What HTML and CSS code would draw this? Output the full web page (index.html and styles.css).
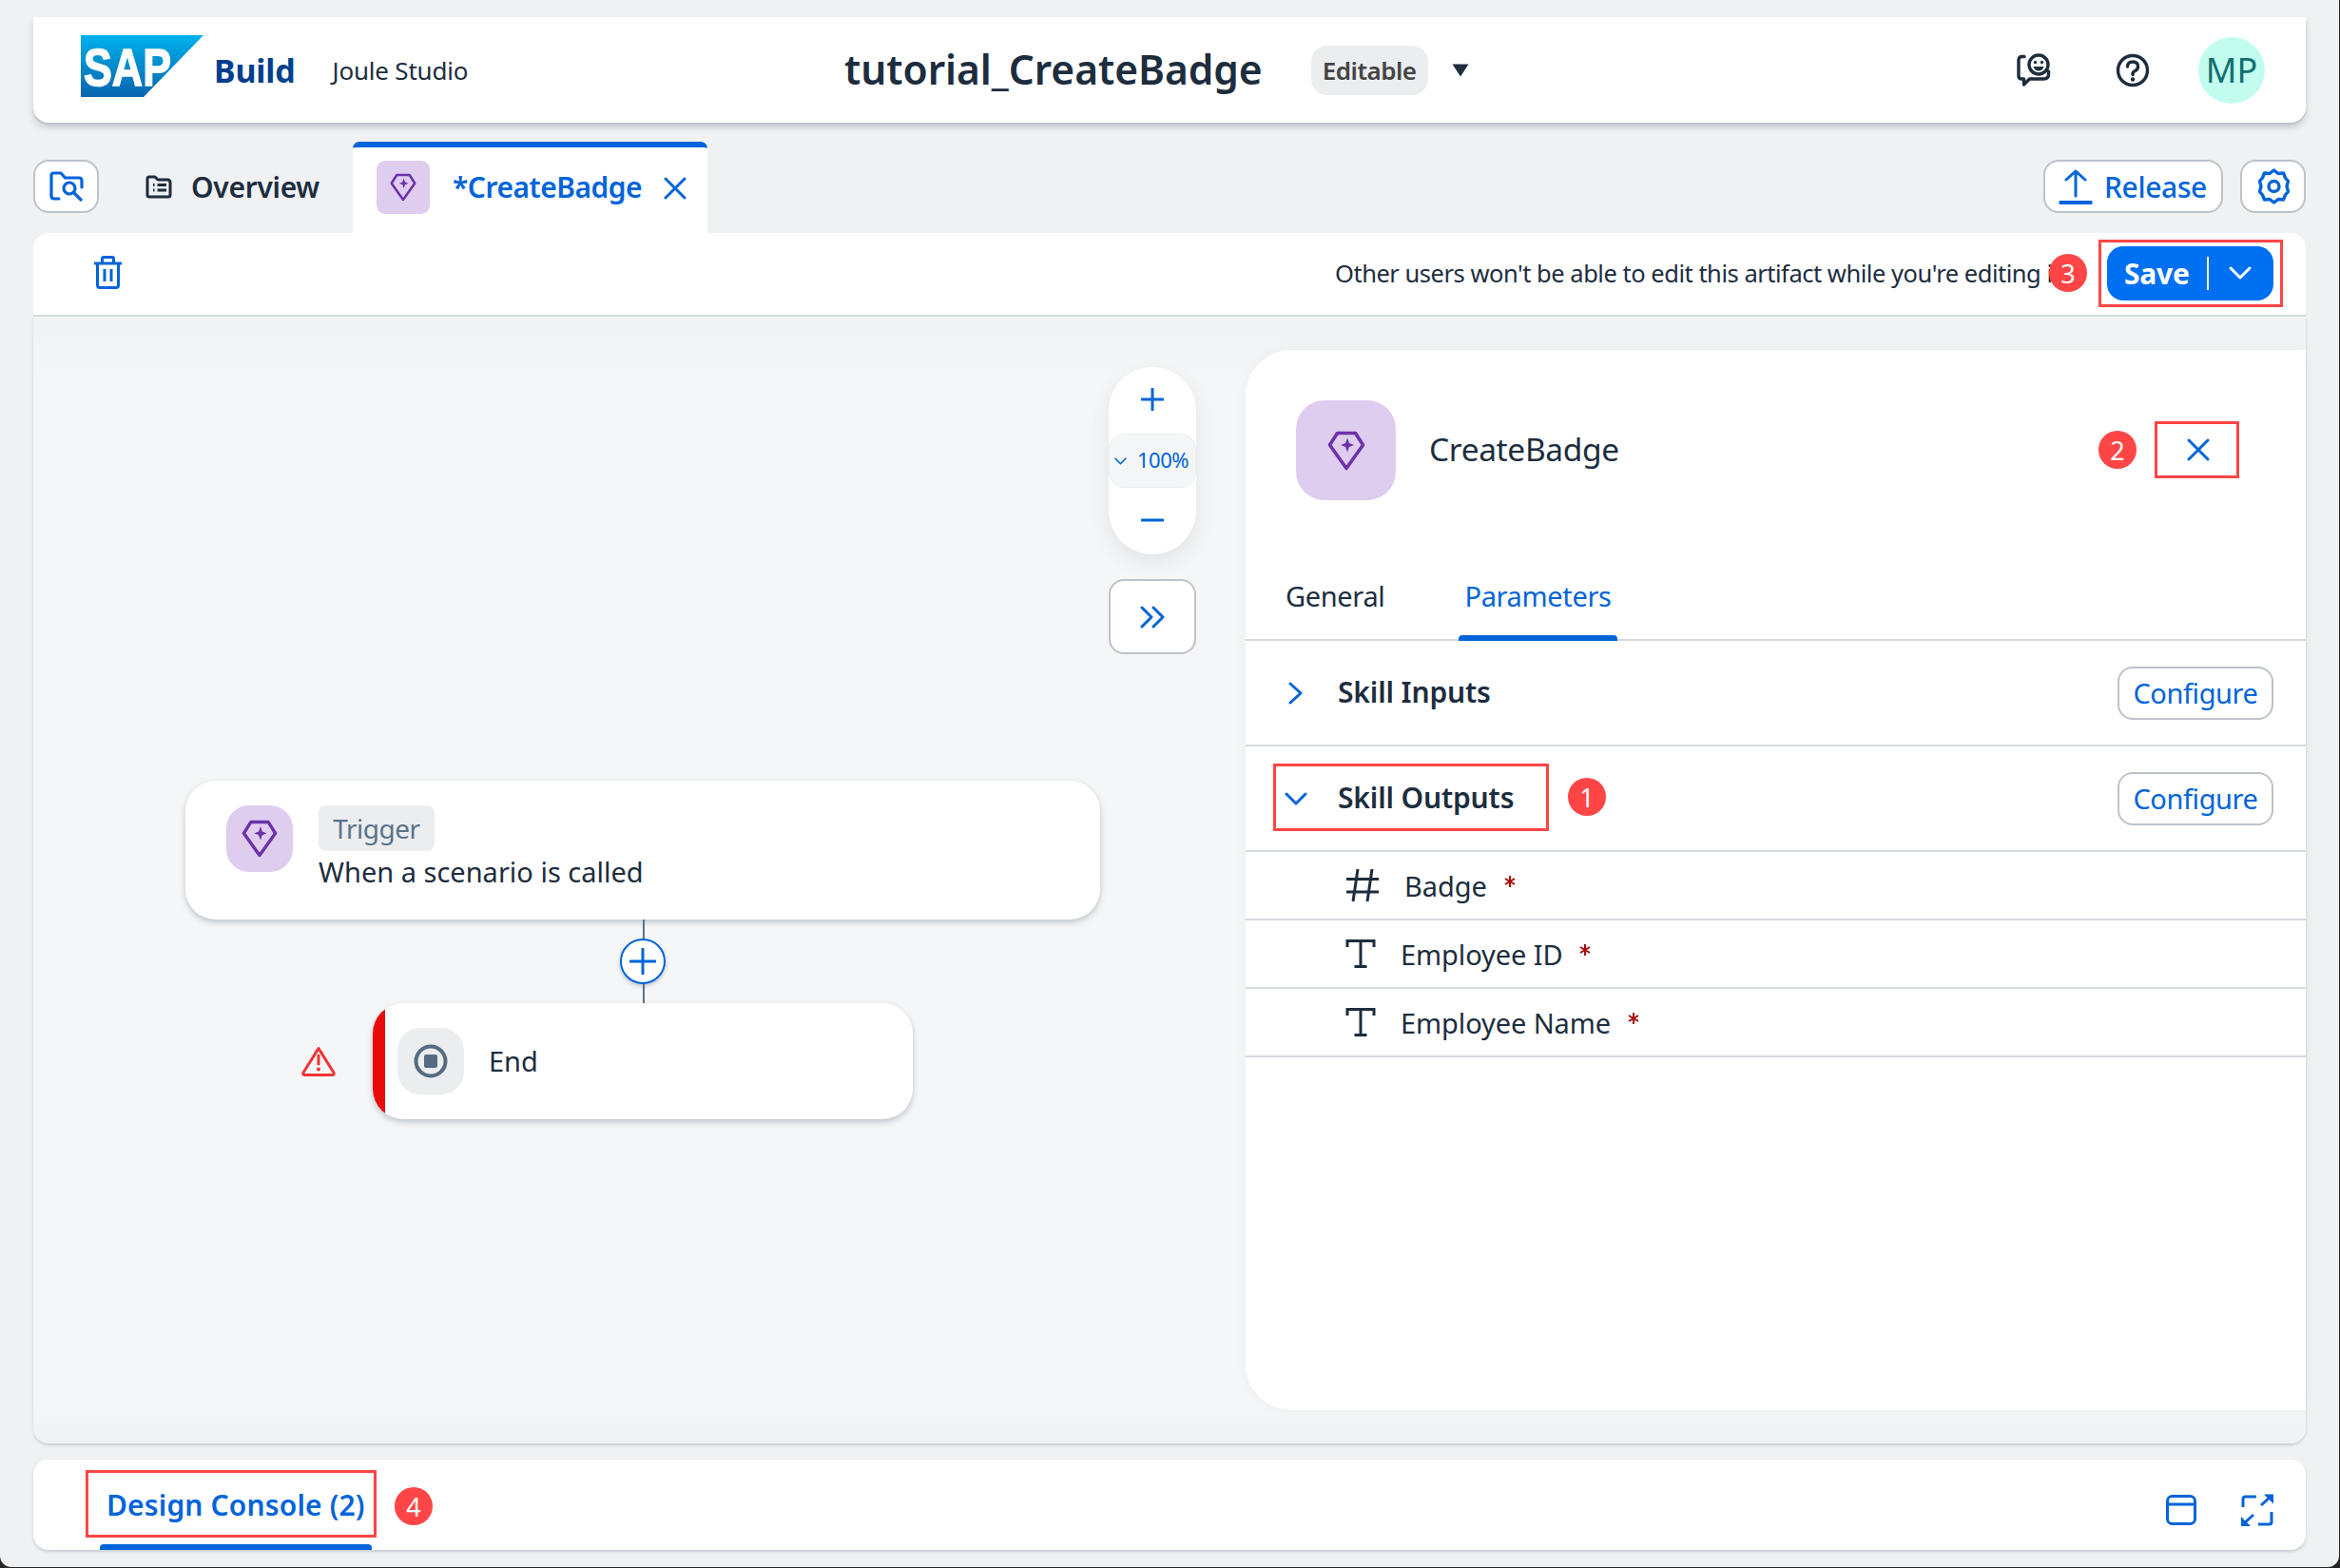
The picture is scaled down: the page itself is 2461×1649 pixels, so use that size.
FILE: index.html
```html
<!DOCTYPE html>
<html lang="en">
<head>
<meta charset="utf-8">
<title>tutorial_CreateBadge</title>
<link rel="stylesheet" href="styles.css">
</head>
<body>
<svg class="defs" width="0" height="0" aria-hidden="true">
  <defs>
    <linearGradient id="sapg" x1="0" y1="0" x2="0" y2="1"><stop offset="0" stop-color="#00b1eb"/><stop offset="1" stop-color="#0764ae"/></linearGradient>
    <symbol id="gem" viewBox="0 0 40 42">
      <path d="M10.5 2.5h19L37.5 15 20 39.5 2.500 15z" fill="none" stroke="#6c32a9" stroke-width="3.600" stroke-linejoin="round"/>
      <path d="M21 7.500l2 5.500 5 2-5 2-2 5.500-2-5.500-5-2 5-2z" fill="#6c32a9"/>
    </symbol>
    <symbol id="x" viewBox="0 0 24 24"><path d="M2 2l20 20M22 2L2 22" fill="none" stroke="#0064d9" stroke-width="3" stroke-linecap="round"/></symbol>
    <symbol id="dn" viewBox="0 0 24 14"><path d="M2 2l10 10L22 2" fill="none" stroke="#0064d9" stroke-width="3" stroke-linecap="round" stroke-linejoin="round"/></symbol>
    <symbol id="star" viewBox="0 0 12 14"><path d="M6 1v12M1 4l10 6M11 4L1 10" fill="none" stroke="#aa0808" stroke-width="2"/></symbol>
    <symbol id="tt" viewBox="0 0 32 32"><path d="M2 9V2.500h28V9M16 2.500V29.500M9.500 29.500h13" fill="none" stroke="#1d2d3e" stroke-width="3"/></symbol>
  </defs>
</svg>
<div class="app">
  <header class="shell">
    <div class="brand">
      <svg class="sap" width="129" height="65" viewBox="0 0 129 65"><path d="M0 0H129L66 65H0z" fill="url(#sapg)"/><text x="3" y="53" class="sap-text" textLength="92" lengthAdjust="spacingAndGlyphs">SAP</text></svg>
      <span class="build">Build</span>
      <span class="studio">Joule Studio</span>
    </div>
    <div class="title-wrap">
      <span class="title">tutorial_CreateBadge</span>
      <span class="pill">Editable</span>
      <svg class="caret" width="18" height="14" viewBox="0 0 18 14"><path d="M0.500 0.500h17L9 13.500z" fill="#1d2d3e"/></svg>
    </div>
    <div class="shell-actions">
      <svg width="37" height="36" viewBox="0 0 37 36"><g fill="none" stroke="#1d2d3e" stroke-width="3.400" stroke-linecap="round" stroke-linejoin="round"><path d="M8 3.500H5.500Q2 3.500 2 7v17q0 3 3.500 3h2v6l6-6h15q5 0 5-5v-3"/><circle cx="23" cy="12" r="10"/></g><circle cx="19.500" cy="9.500" r="1.700" fill="#1d2d3e"/><circle cx="26.500" cy="9.500" r="1.700" fill="#1d2d3e"/><path d="M17.500 14h11q-1.500 4.500-5.500 4.500T17.500 14z" fill="#1d2d3e"/></svg>
      <svg width="36" height="36" viewBox="0 0 36 36"><circle cx="18" cy="18" r="15.500" fill="none" stroke="#1d2d3e" stroke-width="3.400"/><path d="M12.500 14q0-5 5.500-5t5.500 5q0 3-3 4.500T18 22.500" fill="none" stroke="#1d2d3e" stroke-width="3.400" stroke-linecap="round"/><circle cx="18" cy="27.500" r="2.200" fill="#1d2d3e"/></svg>
      <span class="avatar">MP</span>
    </div>
  </header>

  <nav class="tabs">
    <button class="btn btn-icon btn-search">
      <svg width="36" height="32" viewBox="0 0 36 32"><g fill="none" stroke="#0064d9" stroke-width="3.200" stroke-linecap="round" stroke-linejoin="round"><path d="M10 29H5q-3 0-3-3V4.500Q2 2 4.500 2H12l4.500 5H31q3 0 3 3v7"/><circle cx="21" cy="18" r="6"/><path d="M25.500 22.500L33 30"/></g></svg>
    </button>
    <a class="tab-plain">
      <svg width="28" height="25" viewBox="0 0 28 25"><g fill="none" stroke="#1d2d3e" stroke-width="3" stroke-linejoin="round"><path d="M2 21V4q0-2 2-2h6l3 3h10q3 0 3 3v13q0 2-2 2H4q-2 0-2-2z"/></g><path d="M8 10.500h1.500M8 16h1.500M12.500 10.500H22M12.500 16H22" stroke="#1d2d3e" stroke-width="3"/></svg>
      <span>Overview</span>
    </a>
    <a class="tab-active">
      <span class="tab-gem"><svg width="28" height="30"><use href="#gem"/></svg></span>
      <span class="tab-name">*CreateBadge</span>
      <svg width="24" height="24"><use href="#x"/></svg>
    </a>
    <div class="tabs-end">
      <button class="btn btn-release">
        <svg width="36" height="37" viewBox="0 0 36 37"><path d="M18 2v26M8 11l10-9 10 9" fill="none" stroke="#0064d9" stroke-width="3" stroke-linecap="round" stroke-linejoin="round"/><rect x="0.500" y="33" width="35" height="4" rx="1" fill="#0064d9"/></svg>
        <span>Release</span>
      </button>
      <button class="btn btn-icon">
        <svg class="gear" width="33" height="38" viewBox="0 0 33 38"><g fill="none" stroke="#0064d9" stroke-width="3.400" stroke-linejoin="round"><path d="M16.500 2l4.500 3.500 5.500-.5 2 5 3 3.500-1.500 5.500 1.500 5.500-3 3.500-2 5-5.500-.5-4.500 3.500-4.500-3.500-5.500.5-2-5-3-3.500 1.500-5.500-1.500-5.500 3-3.500 2-5 5.500.5z"/><circle cx="16.500" cy="19" r="5.500"/></g></svg>
      </button>
    </div>
  </nav>

  <div class="toolbar">
    <svg class="trash" width="31" height="35" viewBox="0 0 31 35"><g fill="none" stroke="#0064d9" stroke-width="3" stroke-linejoin="round"><path d="M1 8h29M4.500 8v23q0 2.500 2.500 2.500h17q2.500 0 2.500-2.500V8M9.500 8V3q0-1.500 1.500-1.500h9Q21.500 1.500 21.500 3v5M12 14v13M19 14v13"/></g></svg>
    <div class="notice">Other users won't be able to edit this artifact while you're editing it</div>
    <span class="mark mark-3">3</span>
    <div class="save-wrap">
      <div class="save">
        <span class="save-label">Save</span>
        <span class="save-sep"></span>
        <svg width="24" height="14" viewBox="0 0 24 14"><path d="M2 2l10 10L22 2" fill="none" stroke="#fff" stroke-width="3" stroke-linecap="round" stroke-linejoin="round"/></svg>
      </div>
    </div>
  </div>

  <main class="canvas">
    <section class="flow">
      <div class="zoombar">
        <svg width="24" height="24" viewBox="0 0 24 24"><path d="M12 1v22M1 12h22" stroke="#0064d9" stroke-width="3" stroke-linecap="round"/></svg>
        <div class="zoom-val"><svg width="13" height="8"><use href="#dn"/></svg><span>100%</span></div>
        <svg width="24" height="24" viewBox="0 0 24 24"><path d="M1 12h22" stroke="#0064d9" stroke-width="3" stroke-linecap="round"/></svg>
      </div>
      <button class="btn btn-expand">
        <svg width="28" height="24" viewBox="0 0 28 24"><path d="M3 2l10 10L3 22M15 2l10 10-10 10" fill="none" stroke="#0064d9" stroke-width="3" stroke-linecap="round" stroke-linejoin="round"/></svg>
      </button>

      <div class="node node-trigger">
        <span class="node-ico ico-gem"><svg width="38" height="40"><use href="#gem"/></svg></span>
        <div class="node-body">
          <span class="tag">Trigger</span>
          <span class="node-text">When a scenario is called</span>
        </div>
      </div>
      <div class="wire"></div>
      <div class="plus"><svg width="28" height="28" viewBox="0 0 28 28"><path d="M14 1v26M1 14h26" stroke="#0064d9" stroke-width="3" stroke-linecap="round"/></svg></div>
      <div class="node node-end">
        <span class="node-ico ico-end"><svg width="36" height="36" viewBox="0 0 36 36"><circle cx="18" cy="18" r="15.500" fill="none" stroke="#556b82" stroke-width="4"/><rect x="11" y="11" width="14" height="14" rx="2" fill="#556b82"/></svg></span>
        <span class="node-text">End</span>
      </div>
      <svg class="warn" width="36" height="32" viewBox="0 0 36 32"><path d="M18 2.500L34 28q.8 2-1.500 2.500h-29Q1.200 30 2 28z" fill="none" stroke="#f53232" stroke-width="3" stroke-linejoin="round"/><path d="M18 10v9" stroke="#f53232" stroke-width="3" stroke-linecap="round"/><circle cx="18" cy="24.500" r="2" fill="#f53232"/></svg>
    </section>

    <aside class="panel">
      <div class="panel-head">
        <span class="panel-ico"><svg width="40" height="42"><use href="#gem"/></svg></span>
        <span class="panel-name">CreateBadge</span>
        <span class="mark mark-2">2</span>
        <span class="close-box"><svg width="24" height="24"><use href="#x"/></svg></span>
      </div>
      <div class="panel-tabs">
        <span class="ptab ptab-gen">General</span>
        <span class="ptab ptab-on">Parameters</span>
      </div>
      <div class="row-head">
        <svg class="chev-r" width="16" height="24" viewBox="0 0 16 24"><path d="M2 2l11 10L2 22" fill="none" stroke="#0064d9" stroke-width="3" stroke-linecap="round" stroke-linejoin="round"/></svg>
        <span class="row-title">Skill Inputs</span>
        <button class="btn btn-config">Configure</button>
      </div>
      <div class="row-head row-out">
        <svg class="chev-d" width="24" height="14"><use href="#dn"/></svg>
        <span class="row-title">Skill Outputs</span>
        <span class="outbox"></span>
        <span class="mark mark-1">1</span>
        <button class="btn btn-config">Configure</button>
      </div>
      <div class="param">
        <svg class="pi-hash" width="36" height="36" viewBox="0 0 36 36"><path d="M13 1L8 35M28 1L23 35M1 11.500h34M1 25h34" fill="none" stroke="#1d2d3e" stroke-width="3"/></svg>
        <span class="pname">Badge</span>
        <svg class="req" width="12" height="14"><use href="#star"/></svg>
      </div>
      <div class="param">
        <svg class="pi-t" width="32" height="32"><use href="#tt"/></svg>
        <span class="pname">Employee ID</span>
        <svg class="req" width="12" height="14"><use href="#star"/></svg>
      </div>
      <div class="param">
        <svg class="pi-t" width="32" height="32"><use href="#tt"/></svg>
        <span class="pname">Employee Name</span>
        <svg class="req" width="12" height="14"><use href="#star"/></svg>
      </div>
    </aside>
  </main>

  <footer class="console">
    <span class="console-box"></span>
    <span class="console-title">Design Console (2)</span>
    <span class="mark mark-4">4</span>
    <span class="console-line"></span>
    <div class="console-end">
      <svg width="32" height="32" viewBox="0 0 32 32"><g fill="none" stroke="#0064d9" stroke-width="3"><rect x="1.500" y="1.500" width="29" height="29" rx="5"/><path d="M1.500 10h29"/></g></svg>
      <svg width="36" height="36" viewBox="0 0 36 36"><g fill="none" stroke="#0064d9" stroke-width="3"><path d="M17 4H5.500Q3 4 3 6.500V15M33 20v10.500Q33 33 30.500 33H19"/><path d="M22 13L33 3M14 23L3 33"/></g><path d="M25 1.500h10v10zM1 25v10h10z" fill="#0064d9"/></svg>
    </div>
  </footer>
</div>
</body>
</html>
```
FILE: styles.css
```css
* { box-sizing: border-box; }
html, body { margin: 0; padding: 0; background: #262626; }
body { width: 2461px; height: 1649px; overflow: hidden; font-family: "Noto Sans", "Open Sans", sans-serif; color: #1d2d3e; }
.defs { position: absolute; }
.app {
  width: 2460px; height: 1648px; background: #eff1f3;
  border-radius: 0 0 12px 12px; padding: 18px 35px 0;
  display: flex; flex-direction: column; overflow: hidden;
}
svg { display: block; flex: none; }

/* shell */
.shell {
  height: 111px; flex: none; background: #fff; border-radius: 0 0 16px 16px;
  box-shadow: 0 2px 0 #c0c6cb, 0 5px 6px rgba(120,130,140,.35);
  display: flex; align-items: center; position: relative; padding: 0 43px 0 50px;
}
.brand { display: flex; align-items: center; }
.sap { margin-top: -9px; }
.sap-text { font: 700 56px "Liberation Sans", sans-serif; fill: #fff; stroke: #fff; stroke-width: 1.500px; }
.build { font-size: 34px; font-weight: 700; color: #003f8e; margin-left: 11px; letter-spacing: -0.2px; }
.studio { font-size: 26px; margin-left: 39px; letter-spacing: -0.2px; }
.title-wrap { position: absolute; left: 853px; top: 30px; height: 52px; display: flex; align-items: center; }
.title { font-size: 42.500px; font-weight: 600; letter-spacing: -0.05px; margin-top: -3px; }
.pill {
  height: 52px; width: 123px; border-radius: 17px; background: #ebedef; margin-left: 51px;
  display: flex; align-items: center; justify-content: center;
  font-size: 26px; font-weight: 600; color: #444; letter-spacing: -0.5px;
}
.caret { margin-left: 25px; }
.shell-actions { margin-left: auto; display: flex; align-items: center; }
.shell-actions svg:nth-child(1) { margin-right: 67px; }
.shell-actions svg:nth-child(2) { margin-right: 51px; }
.avatar {
  width: 70px; height: 70px; border-radius: 50%; background: #c2fcee; color: #0f6f6f;
  display: flex; align-items: center; justify-content: center; font-size: 36px;
}

/* tabs */
.tabs { height: 96px; flex: none; margin-top: 20px; display: flex; align-items: flex-start; }
.btn { background: #fff; border: 2px solid #bcc3ca; border-radius: 16px; padding: 0; font-family: inherit; color: #0064d9; display: flex; align-items: center; justify-content: center; }
.btn-icon { width: 69px; height: 56px; }
.tabs .btn { margin-top: 19px; }
.tab-plain { display: flex; align-items: center; margin: 35px 0 0 49px; height: 25px; }
.tab-plain span { font-size: 30px; font-weight: 600; margin-left: 20px; letter-spacing: -0.3px; }
.tab-active {
  width: 373px; height: 96px; margin-left: 35px; background: #fff; border-top: 6px solid #0064d9;
  border-radius: 7px 7px 0 0; display: flex; align-items: flex-start; padding: 14px 0 0 25px;
}
.tab-gem { width: 56px; height: 56px; border-radius: 9px; background: #dfcdf0; display: flex; align-items: center; justify-content: center; }
.tab-name { font-size: 30px; font-weight: 600; color: #0064d9; margin: 7px 0 0 24px; width: 222px; letter-spacing: -0.5px; line-height: 42px; }
.tab-active > svg { margin-top: 17px; }
.tabs-end { margin-left: auto; display: flex; }
.btn-release { width: 189px; height: 56px; gap: 12px; padding-right: 1px; }
.btn-release span { font-size: 30px; font-weight: 500; letter-spacing: -0.35px; }
.tabs-end .btn-icon { margin-left: 18px; }
.gear { margin-left: 2px; }

/* toolbar */
.toolbar {
  height: 88px; flex: none; background: #fff; border-radius: 16px 16px 0 0; border-bottom: 2px solid #d5dadd;
  display: flex; align-items: center; padding: 0 34px 0 63px; position: relative;
}
.trash { margin-top: -3px; }
.notice { position: absolute; left: 1369px; top: 20px; font-size: 25.500px; line-height: 44px; white-space: nowrap; letter-spacing: -0.48px; }
.save-wrap { margin-left: auto; border: 3px solid #ff4545; width: 194px; height: 71px; display: flex; align-items: center; justify-content: center; margin-right: -10px; margin-top: -2px; }
.save { width: 175px; height: 57px; margin-left: -1px; background: #0070f2; border-radius: 17px; display: flex; align-items: center; color: #fff; padding-left: 18px; }
.save-label { font-size: 30px; font-weight: 700; letter-spacing: -0.2px; width: 70px; white-space: nowrap; }
.save-sep { width: 2px; height: 35px; background: #fff; margin: 0 21px 0 17px; }

/* marks */
.mark {
  position: absolute; width: 40px; height: 40px; border-radius: 50%; background: #ff4545; color: #fff;
  display: flex; align-items: center; justify-content: center; font-size: 27px; z-index: 3;
}
.mark-3 { left: 2120px; top: 22px; }

/* canvas */
.canvas {
  flex: 1 1 auto; height: 1185px; max-height: 1185px; background: linear-gradient(#f1f2f4 0, #f5f6f7 60px, #f5f6f7 1150px, #f0f1f3 1185px);
  border-radius: 0 0 16px 16px; box-shadow: 0 2px 3px #c8cdd2;
  display: flex; position: relative; align-items: flex-start;
}
.flow { width: 1275px; height: 1150px; flex: none; position: relative; }
.zoombar {
  position: absolute; left: 1131px; top: 53px; width: 92px; height: 197px; border-radius: 46px; background: #fff;
  box-shadow: 0 8px 20px rgba(80,100,120,.12); display: flex; flex-direction: column; align-items: center; padding: 22px 0 24px;
  justify-content: space-between;
}
.zoom-val {
  position: absolute; left: 0; top: 70px; width: 92px; height: 57px; background: #f5f6f7; border-radius: 16px; border: 1px solid #eceef0;
  display: flex; align-items: center; padding-left: 5px; gap: 11px; color: #0064d9; font-size: 22px; letter-spacing: -0.5px;
}
.zoom-val span { margin-top: -3px; }
.btn-expand { position: absolute; left: 1131px; top: 276px; width: 92px; height: 79px; }
.node { position: absolute; background: #fff; border-radius: 32px; box-shadow: 0 3px 6px rgba(90,110,130,.35); display: flex; }
.node-trigger { left: 160px; top: 488px; width: 962px; height: 146px; padding: 26px 0 0 43px; z-index: 2; }
.node-ico { width: 70px; height: 70px; border-radius: 24px; display: flex; align-items: center; justify-content: center; flex: none; }
.ico-gem { background: #dfcdf0; }
.ico-end { background: #ebedef; }
.node-body { margin-left: 27px; display: flex; flex-direction: column; align-items: flex-start; }
.tag { height: 48px; width: 122px; background: #ebedef; border-radius: 8px; display: flex; align-items: center; justify-content: center; font-size: 28px; color: #5b738b; letter-spacing: -0.5px; }
.node-text { font-size: 29px; line-height: 44px; letter-spacing: 0; }
.wire { position: absolute; left: 641px; top: 634px; width: 2px; height: 88px; background: #5b738b; z-index: 1; }
.plus { position: absolute; left: 617px; top: 654px; width: 48px; height: 48px; border-radius: 50%; border: 2px solid #0064d9; background: #fff; box-shadow: 0 2px 4px rgba(90,110,130,.35); display: flex; align-items: center; justify-content: center; z-index: 2; }
.node-end { left: 357px; top: 722px; width: 568px; height: 122px; align-items: center; padding-left: 26px; overflow: hidden; z-index: 2; }
.node-end::before { content: ""; position: absolute; left: 0; top: 0; bottom: 0; width: 13px; background: #e90b0b; }
.node-end .node-text { margin-left: 26px; }
.warn { position: absolute; left: 282px; top: 767px; }

/* panel */
.panel { width: 1115px; height: 1115px; margin-top: 35px; flex: none; background: #fff; border-radius: 48px 0 0 48px; box-shadow: 0 0 12px rgba(120,130,140,.08); position: relative; }
.panel-head { display: flex; padding: 53px 0 0 53px; position: relative; height: 250px; }
.panel-ico { width: 105px; height: 105px; border-radius: 30px; background: #dfcdf0; display: flex; align-items: center; justify-content: center; }
.panel-name { font-size: 33.500px; margin: 28px 0 0 35px; letter-spacing: -0.35px; line-height: 46px; }
.mark-2 { left: 897px; top: 85px; }
.close-box { position: absolute; left: 956px; top: 75px; width: 89px; height: 60px; border: 3px solid #ff4545; display: flex; align-items: center; justify-content: center; padding-left: 2px; }
.panel-tabs { height: 56px; display: flex; border-bottom: 2px solid #d5dadd; padding-left: 38px; }
.ptab { font-size: 29px; height: 56px; line-height: 17px; padding: 0 4px; position: relative; letter-spacing: -0.35px; }
.ptab-gen { margin-right: 74px; }
.ptab-on { color: #0064d9; padding: 0 6px; }
.ptab-on::after { content: ""; position: absolute; left: 0; right: 0; bottom: 0; height: 6px; background: #0064d9; border-radius: 4px 4px 0 0; }
.row-head { height: 111px; border-bottom: 2px solid #d5dadd; display: flex; align-items: center; padding: 0 34px 0 45px; position: relative; }
.row-title { font-size: 30px; font-weight: 600; letter-spacing: -0.15px; position: absolute; left: 97px; top: 32px; line-height: 44px; }
.btn-config { margin-left: auto; width: 164px; height: 56px; font-size: 29px; letter-spacing: -0.4px; }
.chev-d { margin-left: -4px; }
.outbox { position: absolute; left: 29px; top: 18px; width: 290px; height: 71px; border: 3px solid #ff4545; }
.mark-1 { left: 339px; top: 33px; }
.param { height: 72px; border-bottom: 2px solid #d5dadd; display: flex; align-items: center; padding-left: 105px; }
.pi-hash { margin-right: 26px; }
.pi-t { margin-right: 26px; }
.pname { font-size: 29px; letter-spacing: -0.1px; }
.req { margin-left: 18px; margin-top: -8px; }

/* console */
.console { height: 95px; flex: none; margin-top: 17px; background: #fff; border-radius: 16px; box-shadow: 0 2px 3px #c8cdd2; position: relative; display: flex; align-items: center; padding: 0 33px 0 77px; overflow: hidden; }
.console-box { position: absolute; left: 55px; top: 11px; width: 306px; height: 71px; border: 3px solid #ff4545; }
.console-title { font-size: 30px; font-weight: 600; color: #0064d9; letter-spacing: 0.15px; }
.mark-4 { left: 380px; top: 29px; }
.console-line { position: absolute; left: 70px; bottom: 0; width: 286px; height: 6px; background: #0064d9; border-radius: 4px 4px 0 0; }
.console-end { margin-left: auto; display: flex; align-items: center; gap: 46px; margin-top: 11px; }
```
